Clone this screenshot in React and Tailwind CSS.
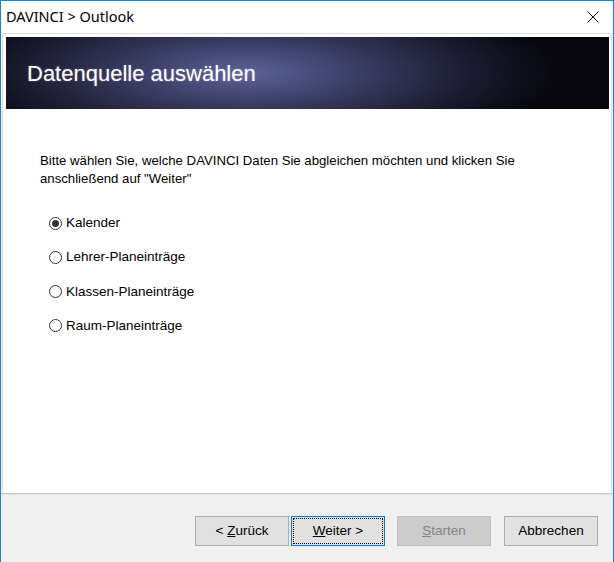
import React from "react";

const options = [
  { label: "Kalender", checked: true },
  { label: "Lehrer-Planeinträge" },
  { label: "Klassen-Planeinträge" },
  { label: "Raum-Planeinträge" },
];

const Radio = ({ checked, label }) => (
  <label className="flex items-center h-[20px]">
    <span className="w-[13px] h-[13px] rounded-full border border-[#333] bg-white flex items-center justify-center">
      {checked && <span className="w-[7px] h-[7px] rounded-full bg-[#333]" />}
    </span>
    <span className="ml-[4px] text-[13.5px] text-black">{label}</span>
  </label>
);

const Button = ({ children, focused, disabled }) => (
  <button
    className={
      focused
        ? "w-[94px] h-[30px] bg-[#e1e1e1] border border-[#0078d7] outline-1 outline-dotted outline-black outline-offset-[-3px] text-[13.5px] text-black"
        : disabled
        ? "w-[94px] h-[30px] bg-[#cccccc] border border-[#bfbfbf] text-[13.5px] text-[#838383]"
        : "w-[94px] h-[30px] bg-[#e1e1e1] border border-[#adadad] text-[13.5px] text-black"
    }
  >
    {children}
  </button>
);

export default function App() {
  return (
    <div className="w-[614px] h-[562px] flex flex-col border-t border-x border-[#1883d7] bg-white font-['Liberation_Sans',Arial,sans-serif] overflow-hidden">
      {/* title bar */}
      <div className="h-[32px] flex items-center justify-between pl-[5px] pr-[14px] shrink-0">
        <span className="text-[14.5px] text-black font-['Noto_Sans',sans-serif]">
          DAVINCI &gt; Outlook
        </span>
        <svg width="12" height="12" viewBox="0 0 12 12">
          <path d="M0.5 0.5 L11.5 11.5 M11.5 0.5 L0.5 11.5" stroke="#000" strokeWidth="1" fill="none" />
        </svg>
      </div>

      {/* content panel */}
      <div className="mx-[1px] h-[460px] shrink-0 border-t border-x border-[#dcdcdc] bg-white pt-[3px] pl-[3px] pr-[2px] flex flex-col">
        <div className="h-[72px] flex items-center pl-[21px] bg-[radial-gradient(ellipse_52%_120%_at_40%_50%,#5c6299_0%,#3d4069_32%,#1a1b2e_72%,#06060c_100%)]">
          <span className="text-[22px] text-white [text-shadow:0_0_2px_rgba(255,255,255,0.35)]">
            Datenquelle auswählen
          </span>
        </div>

        <div className="pl-[34px] pt-[42.5px] text-[13.2px] leading-[18px] text-black">
          <p>
            Bitte wählen Sie, welche DAVINCI Daten Sie abgleichen möchten und klicken Sie
            <br />
            anschließend auf "Weiter"
          </p>
        </div>

        <div className="pl-[43px] pt-[25.5px] flex flex-col gap-[14.33px]">
          {options.map((o) => (
            <Radio key={o.label} {...o} />
          ))}
        </div>
      </div>

      {/* separator */}
      <div className="h-[1px] bg-[#c9c9c9] shrink-0" />
      <div className="h-[1px] bg-[#e3e3e3] shrink-0" />

      {/* bottom bar */}
      <div className="flex-1 bg-[#f0f0f0] flex justify-end items-start pt-[21px] pr-[15px]">
        <Button>
          &lt; <u>Z</u>urück
        </Button>
        <div className="ml-[2px]">
          <Button focused>
            <u>W</u>eiter &gt;
          </Button>
        </div>
        <div className="ml-[12px]">
          <Button disabled>
            <u>S</u>tarten
          </Button>
        </div>
        <div className="ml-[13px]">
          <Button>Abbrechen</Button>
        </div>
      </div>
    </div>
  );
}
